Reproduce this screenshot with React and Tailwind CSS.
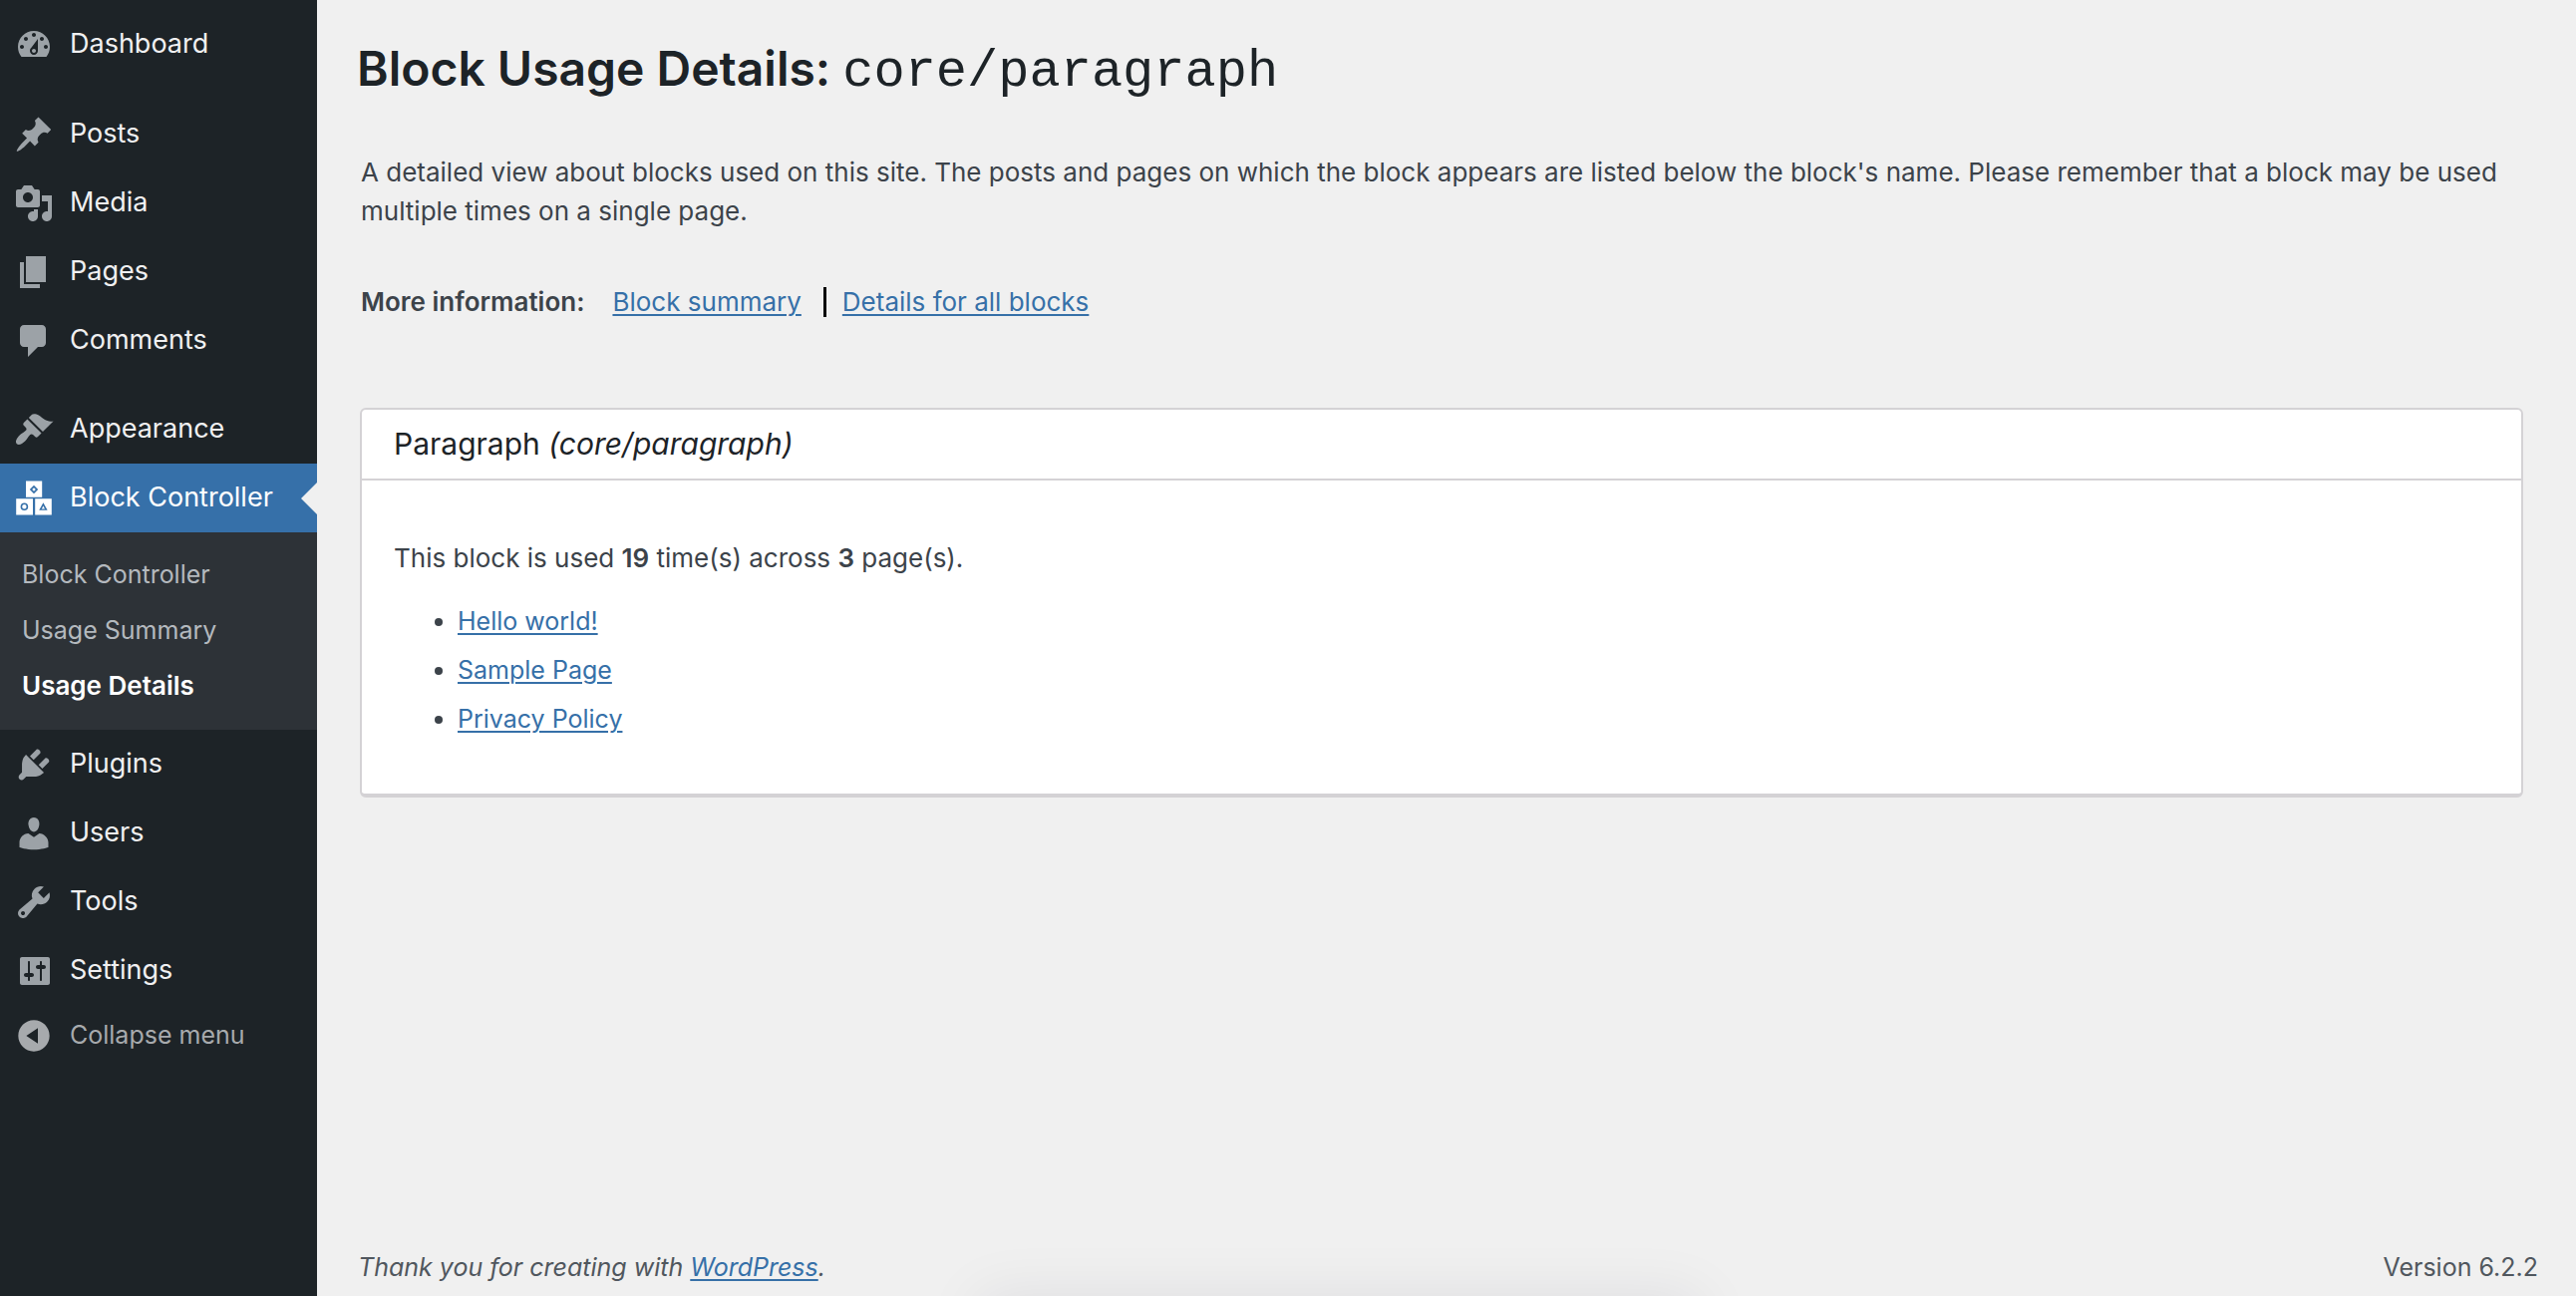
const ICONS = {
  dashboard:
    "M3.76 16h12.48c1.1-1.37 1.76-3.11 1.76-5 0-4.42-3.58-8-8-8s-8 3.58-8 8c0 1.89.66 3.63 1.76 5zM10 4c.55 0 1 .45 1 1s-.45 1-1 1-1-.45-1-1 .45-1 1-1zM6 6c.55 0 1 .45 1 1s-.45 1-1 1-1-.45-1-1 .45-1 1-1zm8 0c.55 0 1 .45 1 1s-.45 1-1 1-1-.45-1-1 .45-1 1-1zm-5.37 5.55L12 7v6c0 1.1-.9 2-2 2s-2-.9-2-2c0-.57.24-1.08.63-1.45zM4 10c.55 0 1 .45 1 1s-.45 1-1 1-1-.45-1-1 .45-1 1-1zm12 0c.55 0 1 .45 1 1s-.45 1-1 1-1-.45-1-1 .45-1 1-1zm-5 3c0-.55-.45-1-1-1s-1 .45-1 1 .45 1 1 1 1-.45 1-1z",
  posts:
    "M10.44 3.02l1.82-1.82 6.36 6.35-1.83 1.82c-1.05-.68-2.48-.57-3.41.36l-.75.75c-.92.93-1.04 2.35-.35 3.41l-1.83 1.82-2.41-2.41-2.8 2.79c-.42.42-3.38 2.71-3.8 2.29s1.86-3.39 2.28-3.81l2.79-2.79L4.1 9.36l1.83-1.82c1.05.69 2.48.57 3.4-.36l.75-.75c.93-.92 1.05-2.35.36-3.41z",
  media:
    "M13 11V4c0-.55-.45-1-1-1h-1.67L9 1H5L3.67 3H2c-.55 0-1 .45-1 1v7c0 .55.45 1 1 1h10c.55 0 1-.45 1-1zM7 4.5c1.38 0 2.5 1.12 2.5 2.5S8.38 9.5 7 9.5 4.5 8.38 4.5 7 5.62 4.5 7 4.5zM14 6h5v10.5c0 1.38-1.12 2.5-2.5 2.5S14 17.88 14 16.5s1.12-2.5 2.5-2.5c.17 0 .34.02.5.05V9h-3V6zm-4 8.05V13h2v3.5c0 1.38-1.12 2.5-2.5 2.5S7 17.88 7 16.5 8.12 14 9.5 14c.17 0 .34.02.5.05z",
  pages: "M6 15V2h10v13H6zm-1 1h8v2H3V5h2v11z",
  comments:
    "M5 2h9c1.1 0 2 .9 2 2v7c0 1.1-.9 2-2 2h-2l-5 5v-5H5c-1.1 0-2-.9-2-2V4c0-1.1.9-2 2-2z",
  appearance:
    "M14.48 11.06L7.41 3.99l1.5-1.5c.5-.56 2.3-.47 3.51.32 1.21.8 1.43 1.28 2.91 2.1 1.18.64 2.45 1.26 4.45.85zm-.71.71L6.7 4.7 4.93 6.47c-.39.39-.39 1.02 0 1.41l1.06 1.06c.39.39.39 1.03 0 1.42-.6.6-1.43 1.11-2.21 1.69-.35.26-.7.53-1.01.84C1.43 14.23.4 16.08 1.4 17.07c.99 1 2.84-.03 4.18-1.36.31-.31.58-.66.85-1.02.57-.78 1.08-1.61 1.69-2.21.39-.39 1.02-.39 1.41 0l1.06 1.06c.39.39 1.02.39 1.41 0z",
  blocks:
    "M6 1.3h8.1v8.1H6zM10 3.4L7.9 5.5 10 7.6l2.1-2.1zM10 4.6l.9.9-.9.9-.9-.9zM1.1 10.1h8.4v8.1H1.1zM5.2 12.2a1.9 1.9 0 1 0 0 3.8 1.9 1.9 0 0 0 0-3.8zM5.2 13a1.1 1.1 0 1 1 0 2.2 1.1 1.1 0 0 1 0-2.2zM10.6 10.1h8.3v8.1h-8.3zM14.7 12.1l-2.1 3.8h4.2zM14.7 13.8l.8 1.4h-1.6z",
  plugins:
    "M13.11 4.36L9.87 7.6 8 5.73l3.24-3.24c.35-.34 1.05-.2 1.56.32.52.51.66 1.21.31 1.55zm-8 1.77l.91-1.12 9.01 9.01-1.19.84c-.71.71-2.63 1.16-3.82 1.16H6.14L4.9 17.26c-.59.59-1.54.59-2.12 0-.59-.58-.59-1.53 0-2.12l1.24-1.24v-3.88c0-1.13.4-3.19 1.09-3.89zm7.26 3.97l3.24-3.24c.34-.35 1.04-.21 1.55.31.52.51.66 1.21.31 1.55l-3.24 3.25z",
  users:
    "M10 9.25c-2.27 0-2.73-3.44-2.73-3.44C7 4.02 7.82 2 9.97 2c2.16 0 2.98 2.02 2.71 3.81 0 0-.41 3.44-2.68 3.44zm0 2.57L12.72 10c2.39 0 4.52 2.33 4.52 4.53v2.49s-3.65 1.13-7.24 1.13c-3.65 0-7.24-1.13-7.24-1.13v-2.49c0-2.25 1.94-4.48 4.47-4.48z",
  tools:
    "M16.68 9.77c-1.34 1.34-3.3 1.67-4.95.99l-5.41 6.52c-.99.99-2.59.99-3.58 0s-.99-2.59 0-3.57l6.52-5.42c-.68-1.65-.35-3.61.99-4.95 1.28-1.28 3.12-1.62 4.72-1.06l-2.89 2.89 2.82 2.82 2.86-2.87c.53 1.58.18 3.39-1.08 4.65zM3.81 16.21c.4.39 1.04.39 1.43 0 .4-.4.4-1.04 0-1.43-.39-.4-1.03-.4-1.43 0-.39.39-.39 1.03 0 1.43z",
  settings:
    "M18 16V4c0-.55-.45-1-1-1H4c-.55 0-1 .45-1 1v12c0 .55.45 1 1 1h13c.55 0 1-.45 1-1zM8 11h1c.55 0 1 .45 1 1s-.45 1-1 1H8v1.5c0 .28-.22.5-.5.5s-.5-.22-.5-.5V13H6c-.55 0-1-.45-1-1s.45-1 1-1h1V5.5c0-.28.22-.5.5-.5s.5.22.5.5V11zm5-2h-1c-.55 0-1-.45-1-1s.45-1 1-1h1V5.5c0-.28.22-.5.5-.5s.5.22.5.5V7h1c.55 0 1 .45 1 1s-.45 1-1 1h-1v5.5c0 .28-.22.5-.5.5s-.5-.22-.5-.5V9z",
  collapse:
    "M10 2.16c4.33 0 7.84 3.51 7.84 7.84s-3.51 7.84-7.84 7.84S2.16 14.33 2.16 10 5.71 2.16 10 2.16zm2 11.72V6.12L6.18 9.97z",
};

function Icon({ name, className = "" }) {
  return (
    <svg viewBox="0 0 20 20" fill="currentColor" fillRule="evenodd" aria-hidden="true" className={"size-10 shrink-0 " + className}>
      <path d={ICONS[name]} />
    </svg>
  );
}

function MenuItem({ icon, label }) {
  return (
    <li>
      <a href="#" className="flex h-[69px] items-center gap-4 pl-3.5 text-[27px] text-[#f0f0f1]">
        <Icon name={icon} className="text-[#9ca2a7]" />
        {label}
      </a>
    </li>
  );
}

function TextLink({ children }) {
  return (
    <a href="#" className="text-[#3670a8] underline decoration-2 underline-offset-3">
      {children}
    </a>
  );
}

const POSTS = ["Hello world!", "Sample Page", "Privacy Policy"];

export default function App() {
  return (
    <div className="relative flex min-h-screen bg-[#f0f0f0] font-['Inter',sans-serif] text-[25px] text-[#3c434a]">
      <nav aria-label="Main menu" className="w-[318px] shrink-0 bg-[#1d2327] pt-2.5">
        <ul>
          <MenuItem icon="dashboard" label="Dashboard" />
        </ul>
        <ul className="mt-[21px]">
          <MenuItem icon="posts" label="Posts" />
          <MenuItem icon="media" label="Media" />
          <MenuItem icon="pages" label="Pages" />
          <MenuItem icon="comments" label="Comments" />
        </ul>
        <ul className="mt-5">
          <MenuItem icon="appearance" label="Appearance" />
          <li>
            <a href="#" className="relative flex h-[69px] items-center gap-4 bg-[#3670a9] pl-3.5 text-[27px] text-white">
              <Icon name="blocks" />
              Block Controller
              <span className="absolute top-1/2 right-0 size-0 -translate-y-1/2 border-y-[16px] border-r-[16px] border-y-transparent border-r-[#f0f0f0]" />
            </a>
            <ul className="bg-[#2d3237] pt-[14px] pb-4 pl-[22px] leading-[56px] text-[#b4b9be]">
              <li><a href="#">Block Controller</a></li>
              <li><a href="#">Usage Summary</a></li>
              <li className="text-[26px]"><a href="#" aria-current="page" className="font-semibold text-white">Usage Details</a></li>
            </ul>
          </li>
          <MenuItem icon="plugins" label="Plugins" />
          <MenuItem icon="users" label="Users" />
          <MenuItem icon="tools" label="Tools" />
          <MenuItem icon="settings" label="Settings" />
        </ul>
        <button type="button" className="flex h-[62px] items-center gap-4 pl-3.5 text-[#a7aaad]">
          <Icon name="collapse" />
          Collapse menu
        </button>
      </nav>

      <div className="flex min-w-0 flex-1 flex-col">
        <main className="flex-1 pr-[53px] pl-[44px] text-[26px]">
          <h1 className="-ml-1 pt-[35px] text-[48px] leading-[68px] font-semibold text-[#1d2327]">
            Block Usage Details: <code className="font-['Liberation_Mono',monospace] text-[52px] font-normal">core/paragraph</code>
          </h1>
          <p className="mt-[46px] leading-[39px]">
            A detailed view about blocks used on this site. The posts and pages on which the block appears are listed
            below the block's name. Please remember that a block may be used multiple times on a single page.
          </p>
          <div className="mt-[52px] flex items-center leading-[39px]">
            <strong className="mr-7 font-semibold">More information:</strong>
            <TextLink>Block summary</TextLink>
            <span className="mr-4 ml-[22px] h-[30px] w-[3px] bg-black" />
            <TextLink>Details for all blocks</TextLink>
          </div>

          <section className="-ml-px mt-[87px] rounded-md border-2 border-b-4 border-[#d4d2d5] bg-white">
            <h2 className="border-b-2 border-[#d4d2d5] px-8 py-[15px] text-[30px] leading-[39px] text-[#1d2327]">
              Paragraph <em>(core/paragraph)</em>
            </h2>
            <div className="px-8 pt-[58px] pb-[50px]">
              <p className="leading-[39px]">
                This block is used <strong className="font-semibold">19</strong> time(s) across{" "}
                <strong className="font-semibold">3</strong> page(s).
              </p>
              <ul className="mt-5 list-disc pl-16 text-[25px] leading-[49px]">
                {POSTS.map((title) => (
                  <li key={title}>
                    <TextLink>{title}</TextLink>
                  </li>
                ))}
              </ul>
            </div>
          </section>
        </main>

        <footer className="flex items-center justify-between pr-[38px] pb-[9px] pl-[41px] leading-[39px] text-[#50575e]">
          <p className="italic">
            Thank you for creating with <TextLink>WordPress</TextLink>.
          </p>
          <p>Version 6.2.2</p>
        </footer>
      </div>

      <div aria-hidden="true" className="pointer-events-none absolute inset-x-0 bottom-0 h-16 overflow-hidden">
        <div className="mt-16 ml-[38%] h-16 w-[28%] shadow-[0_0_60px_rgba(20,20,50,0.08)]" />
      </div>
    </div>
  );
}
